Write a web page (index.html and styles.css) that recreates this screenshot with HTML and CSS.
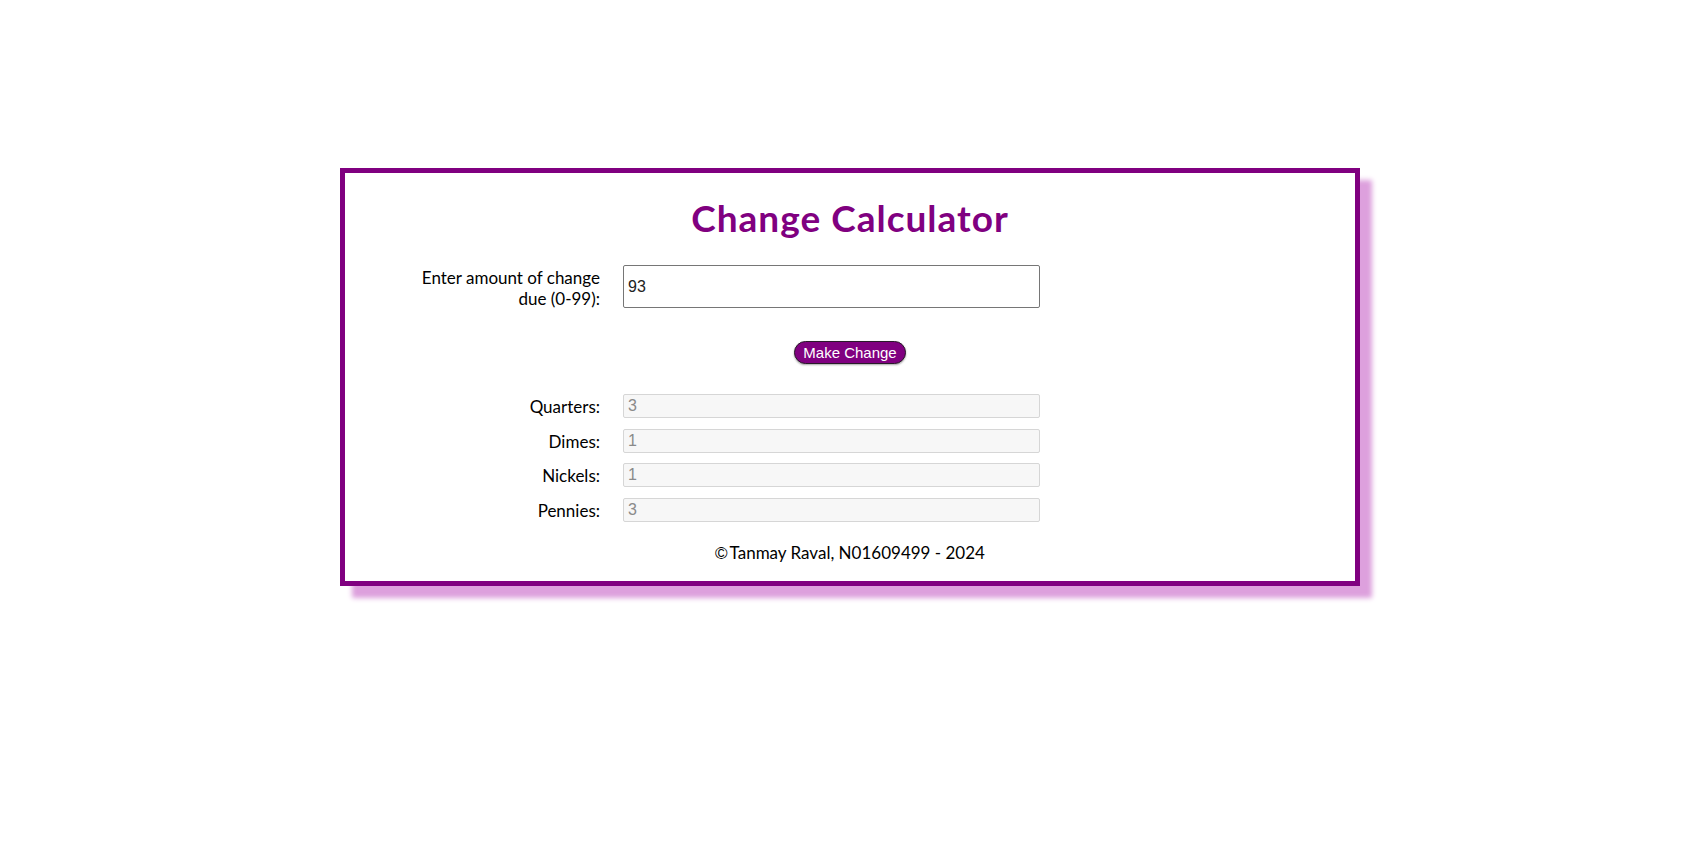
FILE: index.html
```html
<!DOCTYPE html>
<html lang="en">
<head>
<meta charset="utf-8">
<title>Change Calculator</title>
<link rel="stylesheet" href="styles.css">
</head>
<body>
<main class="card">
  <h1 class="title">Change Calculator</h1>
  <form class="form">
    <div class="row row-main">
      <label class="label" for="amount">Enter amount of change due (0-99):</label>
      <input class="field field-main" id="amount" type="text" value="93">
    </div>
    <div class="actions">
      <button type="button" class="btn">Make Change</button>
    </div>
    <div class="results">
      <div class="row">
        <label class="label" for="q">Quarters:</label>
        <input class="field field-out" id="q" type="text" value="3" disabled>
      </div>
      <div class="row">
        <label class="label" for="d">Dimes:</label>
        <input class="field field-out" id="d" type="text" value="1" disabled>
      </div>
      <div class="row">
        <label class="label" for="n">Nickels:</label>
        <input class="field field-out" id="n" type="text" value="1" disabled>
      </div>
      <div class="row">
        <label class="label" for="p">Pennies:</label>
        <input class="field field-out" id="p" type="text" value="3" disabled>
      </div>
    </div>
  </form>
  <footer class="footer"><span class="copy">&copy;</span>Tanmay Raval, N01609499 - 2024</footer>
</main>
</body>
</html>
```

FILE: styles.css
```css
html, body {
  margin: 0;
  padding: 0;
  background: #ffffff;
}

body {
  font-family: "Lato", "Open Sans", sans-serif;
  color: #000;
  padding-bottom: 60px;
}

.card {
  box-sizing: border-box;
  width: 1020px;
  margin: 168px auto 40px;
  border: 5px solid #800080;
  background: #fff;
  box-shadow: 12px 12px 5px #dda0dd;
  padding: 23px 0 16px;
}

.title {
  margin: 0 0 25px;
  text-align: center;
  color: #800080;
  font-size: 37px;
  font-weight: 700;
  letter-spacing: 1px;
  line-height: 44px;
}

.form {
  margin: 0 0 0 60px;
}

.row {
  display: grid;
  grid-template-columns: 195px 417px;
  column-gap: 23px;
  align-items: start;
}

.label {
  text-align: right;
  font-size: 17px;
  line-height: 21px;
  padding-top: 2px;
}

.field {
  box-sizing: border-box;
  width: 417px;
  margin: 0;
  font-family: "Liberation Sans", Arial, sans-serif;
  font-size: 16px;
  padding: 0 4px;
  border-radius: 2px;
}

.field-main {
  height: 43px;
  border: 1px solid #767676;
  color: #222;
  background: #fff;
}

.actions {
  display: flex;
  justify-content: center;
  margin: 32px 0 0 -60px;
}

.btn {
  font-family: "Liberation Sans", Arial, sans-serif;
  font-size: 15px;
  line-height: 17px;
  color: #fff;
  background: #800080;
  border: 1px solid #2a1a2a;
  border-radius: 12px;
  padding: 2px 8px;
  box-shadow: 0 1px 2px rgba(0,0,0,0.35);
}

.results {
  margin-top: 30px;
  display: flex;
  flex-direction: column;
  gap: 10.5px;
}

.field-out {
  height: 24px;
  border: 1px solid #d6d6d6;
  background: #f7f7f7;
  color: #8a8a8a;
}

.footer {
  margin-top: 20px;
  text-align: center;
  font-size: 17px;
  line-height: 22px;
}

.copy {
  font-family: "Liberation Sans", Arial, sans-serif;
  margin-right: 2px;
}
```
